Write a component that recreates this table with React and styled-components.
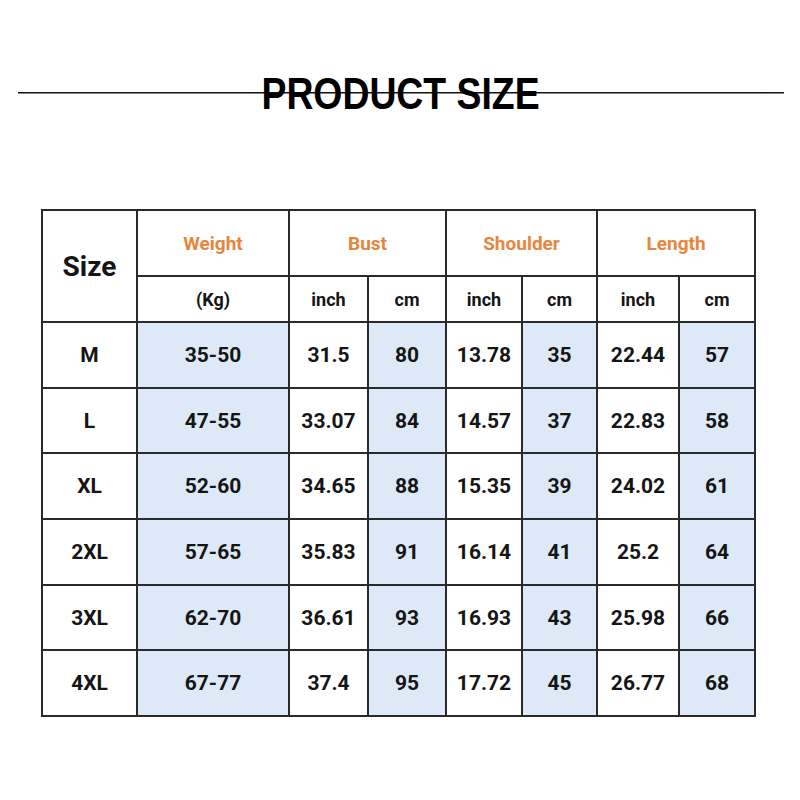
import styled, { createGlobalStyle } from "styled-components";

const GlobalStyle = createGlobalStyle`
  body {
    margin: 0;
    background: #fff;
    font-family: Roboto, "Liberation Sans", sans-serif;
  }
`;

const Page = styled.div`
  width: 800px;
  height: 800px;
  box-sizing: border-box;
  padding-top: 71px;
`;

const TitleBar = styled.div`
  margin: 0 16px 0 18px;
  height: 46px;
  display: flex;
  align-items: center;
  justify-content: center;
  background: linear-gradient(#111, #111) no-repeat;
  background-size: 100% 1.5px;
  background-position: 0 21px;
`;

const Title = styled.h1`
  margin: 0;
  font-family: "Liberation Sans", sans-serif;
  font-weight: 700;
  font-size: 45px;
  line-height: 46px;
  color: #000;
  transform: scaleX(0.83);
`;

const Table = styled.table`
  margin: 92px 0 0 41px;
  width: 713px;
  border-collapse: collapse;
  table-layout: fixed;
`;

const Cell = styled.td`
  border: 2px solid #2a2a2a;
  padding: 0;
  text-align: center;
  vertical-align: middle;
  font-weight: 700;
  font-size: ${(p) => (p.$big ? "28px" : p.$sub ? "18px" : p.$orange ? "19px" : "21px")};
  color: ${(p) => (p.$orange ? "#e8853d" : "#151515")};
  background: ${(p) => (p.$blue ? "#dde9f6" : "#fff")};
`;

const HeadRow = styled.tr`
  height: ${(p) => p.$h}px;
`;

const Row = styled.tr`
  height: 65.7px;
`;

const widths = [95, 152, 79, 78, 76, 75, 82, 76];

const rows = [
  ["M", "35-50", "31.5", "80", "13.78", "35", "22.44", "57"],
  ["L", "47-55", "33.07", "84", "14.57", "37", "22.83", "58"],
  ["XL", "52-60", "34.65", "88", "15.35", "39", "24.02", "61"],
  ["2XL", "57-65", "35.83", "91", "16.14", "41", "25.2", "64"],
  ["3XL", "62-70", "36.61", "93", "16.93", "43", "25.98", "66"],
  ["4XL", "67-77", "37.4", "95", "17.72", "45", "26.77", "68"],
];

const blueCols = [1, 3, 5, 7];

function App() {
  return (
    <Page>
      <GlobalStyle />
      <TitleBar>
        <Title>PRODUCT SIZE</Title>
      </TitleBar>
      <Table>
        <colgroup>
          {widths.map((w, i) => (
            <col key={i} style={{ width: w }} />
          ))}
        </colgroup>
        <tbody>
          <HeadRow $h={66}>
            <Cell as="th" rowSpan={2} $big>
              Size
            </Cell>
            <Cell as="th" $orange>Weight</Cell>
            <Cell as="th" colSpan={2} $orange>Bust</Cell>
            <Cell as="th" colSpan={2} $orange>Shoulder</Cell>
            <Cell as="th" colSpan={2} $orange>Length</Cell>
          </HeadRow>
          <HeadRow $h={46}>
            <Cell as="th" $sub>(Kg)</Cell>
            <Cell as="th" $sub>inch</Cell>
            <Cell as="th" $sub>cm</Cell>
            <Cell as="th" $sub>inch</Cell>
            <Cell as="th" $sub>cm</Cell>
            <Cell as="th" $sub>inch</Cell>
            <Cell as="th" $sub>cm</Cell>
          </HeadRow>
          {rows.map((r) => (
            <Row key={r[0]}>
              {r.map((v, i) => (
                <Cell key={i} $blue={blueCols.includes(i)}>
                  {v}
                </Cell>
              ))}
            </Row>
          ))}
        </tbody>
      </Table>
    </Page>
  );
}

export default App;
